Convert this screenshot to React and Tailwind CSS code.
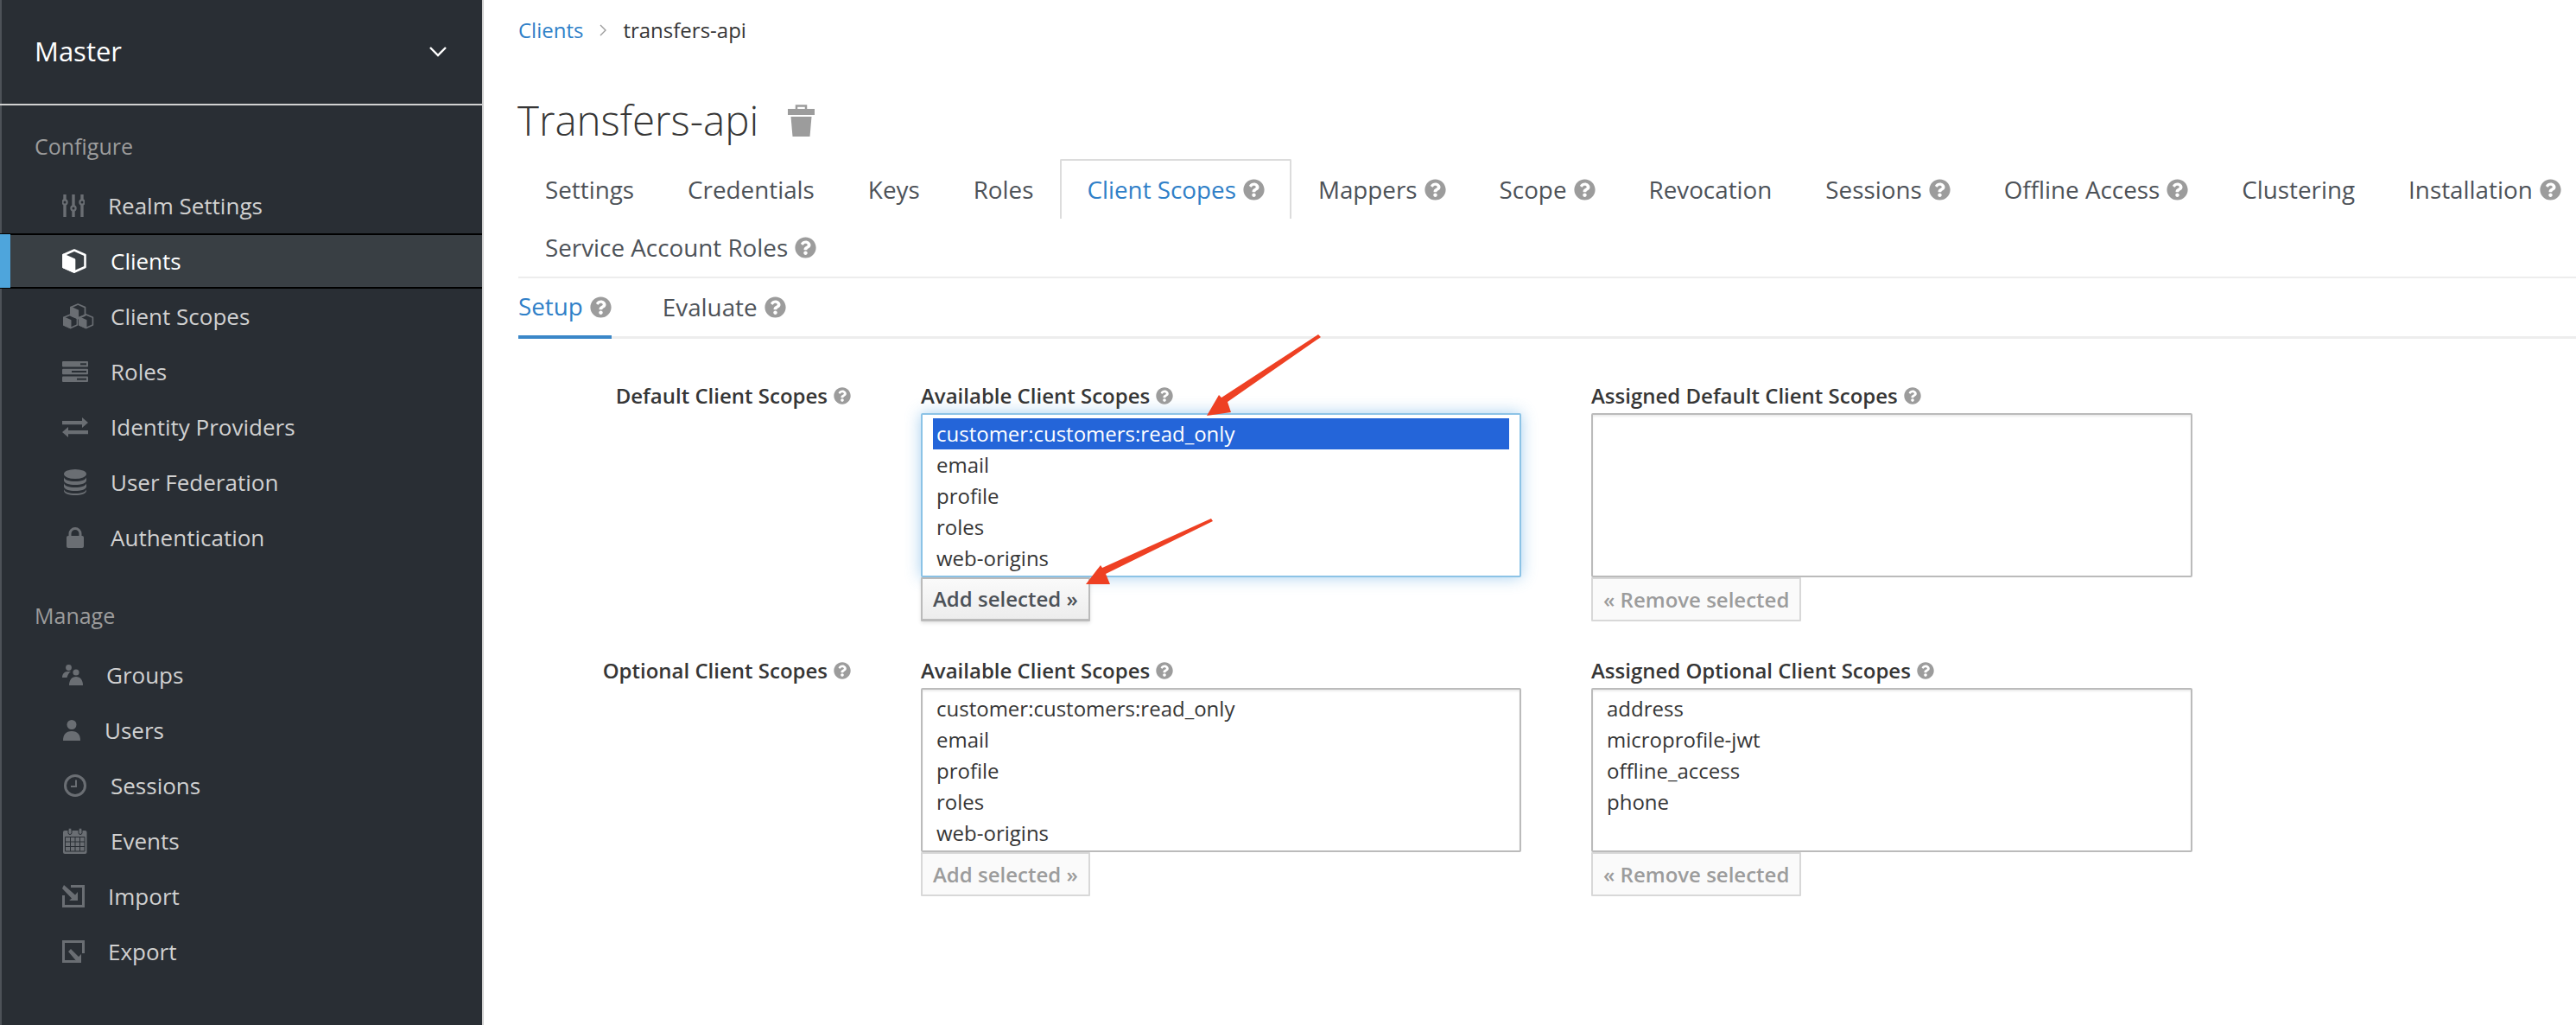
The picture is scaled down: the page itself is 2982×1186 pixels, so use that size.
import { FaQuestionCircle } from 'react-icons/fa';

function CubeShape({ x = 0, y = 0, s = 1, stroke, fill }) {
  return (
    <g transform={`translate(${x} ${y}) scale(${s})`}>
      <path d="M14 1.5 L26.5 7 V21 L14 26.5 L1.5 21 V7 Z" fill="none" stroke={stroke} strokeWidth="2.6" strokeLinejoin="round" />
      <path d="M1.5 7 L14 12.5 V26.5 L1.5 21 Z" fill={fill} stroke={stroke} strokeWidth="2.6" strokeLinejoin="round" />
    </g>
  );
}

function SlidersIcon() {
  return (
    <svg width="26" height="26" viewBox="0 0 26 26" className="mr-[27px]">
      <g stroke="#6a6e73" strokeWidth="3.4">
        <path d="M3 0V26M13 0V26M23 0V26" />
      </g>
      <g fill="#292e34" stroke="#6a6e73" strokeWidth="2.2">
        <circle cx="3" cy="9" r="2.6" />
        <circle cx="13" cy="16" r="2.6" />
        <circle cx="23" cy="9" r="2.6" />
      </g>
    </svg>
  );
}

function ClientIcon() {
  return (
    <svg width="28" height="28" viewBox="0 0 28 28" className="mr-[28px]">
      <CubeShape stroke="#fff" fill="#fff" />
    </svg>
  );
}

function ScopesIcon() {
  return (
    <svg width="37" height="30" viewBox="0 0 37 30" className="mr-[19px]">
      <CubeShape x={9} y={0} s={0.66} stroke="#6a6e73" fill="#6a6e73" />
      <CubeShape x={1} y={12} s={0.62} stroke="#6a6e73" fill="#6a6e73" />
      <CubeShape x={19} y={12} s={0.62} stroke="#6a6e73" fill="#6a6e73" />
    </svg>
  );
}

function RolesIcon() {
  return (
    <svg width="30" height="24" viewBox="0 0 30 24" className="mr-[26px]">
      <rect y="0" width="30" height="6.5" rx="1" fill="#6a6e73" />
      <rect y="8.7" width="30" height="6.5" rx="1" fill="#6a6e73" />
      <rect y="17.4" width="30" height="6.5" rx="1" fill="#6a6e73" />
      <rect x="21" y="2.3" width="7" height="2" fill="#292e34" />
      <rect x="11" y="11" width="17" height="2" fill="#292e34" />
      <rect x="17" y="19.7" width="11" height="2" fill="#292e34" />
    </svg>
  );
}

function ExchangeIcon() {
  return (
    <svg width="30" height="23" viewBox="0 0 30 23" className="mr-[26px]">
      <path d="M0 4H23V0L30 6L23 12V8.2H0Z" fill="#6a6e73" />
      <path d="M30 15H7V11L0 17L7 23V19.2H30Z" fill="#6a6e73" />
    </svg>
  );
}

function DbIcon() {
  return (
    <svg width="26" height="30" viewBox="0 0 26 30" className="ml-[2px] mr-[28px]">
      <ellipse cx="13" cy="5.5" rx="13" ry="5.5" fill="#6a6e73" />
      <path d="M0 9c0 3 6 5 13 5s13-2 13-5v4c0 3-6 5-13 5S0 16 0 13Z" fill="#6a6e73" />
      <path d="M0 16c0 3 6 5 13 5s13-2 13-5v4c0 3-6 5-13 5S0 23 0 20Z" fill="#6a6e73" />
      <path d="M0 23c0 3 6 5 13 5s13-2 13-5v2c0 3-6 5-13 5S0 28 0 25Z" fill="#6a6e73" />
    </svg>
  );
}

function LockIcon() {
  return (
    <svg width="20" height="24" viewBox="0 0 20 24" className="ml-[5px] mr-[31px]">
      <path d="M4 11V7.5a6 6 0 0 1 12 0V11" fill="none" stroke="#6a6e73" strokeWidth="3" />
      <rect y="10" width="20" height="14" rx="2" fill="#6a6e73" />
    </svg>
  );
}

function GroupsIcon() {
  return (
    <svg width="24" height="24" viewBox="0 0 24 24" className="mr-[27px]">
      <circle cx="7.5" cy="3.5" r="3.4" fill="#6a6e73" />
      <path d="M0 15c0-4 2.5-7 6-7h4c-2.5 1.5-3.5 4-4.5 7Z" fill="#6a6e73" />
      <circle cx="16" cy="9" r="3.6" fill="#6a6e73" />
      <path d="M8 24c0-6 3-10 8-10s8 4 8 10Z" fill="#6a6e73" />
    </svg>
  );
}

function UserIcon() {
  return (
    <svg width="20" height="24" viewBox="0 0 20 24" className="ml-[1px] mr-[28px]">
      <circle cx="10" cy="5.5" r="5.5" fill="#6a6e73" />
      <path d="M0 24c0-7 3-11 10-11s10 4 10 11Z" fill="#6a6e73" />
    </svg>
  );
}

function ClockIcon() {
  return (
    <svg width="26" height="26" viewBox="0 0 26 26" className="ml-[2px] mr-[28px]">
      <circle cx="13" cy="13" r="11.5" fill="none" stroke="#6a6e73" strokeWidth="3" />
      <path d="M14 6.5V14H8" fill="none" stroke="#6a6e73" strokeWidth="2" />
    </svg>
  );
}

function CalendarIcon() {
  return (
    <svg width="28" height="30" viewBox="0 0 28 30" className="ml-[1px] mr-[27px]">
      <path d="M2 3H25.5a2 2 0 0 1 2 2V28a2 2 0 0 1-2 2H2a2 2 0 0 1-2-2V5a2 2 0 0 1 2-2Z" fill="#6a6e73" />
      <rect x="6" y="0" width="4" height="7.5" rx="2" fill="#6a6e73" stroke="#292e34" strokeWidth="1" />
      <rect x="18" y="0" width="4" height="7.5" rx="2" fill="#6a6e73" stroke="#292e34" strokeWidth="1" />
      <path d="M2.5 10.5H25M2.5 16H25M2.5 21.5H25M2.5 27H25M8.5 10.5V27M14 10.5V27M19.5 10.5V27M2.5 10.5V27M25 10.5V27" stroke="#292e34" strokeWidth="1" fill="none" />
    </svg>
  );
}

function ImportIcon() {
  return (
    <svg width="26" height="26" viewBox="0 0 26 26" className="mr-[27px]">
      <path d="M10 1.5H24.5V24.5H1.5V12" fill="none" stroke="#6a6e73" strokeWidth="3" />
      <path d="M2 0L15 11.5L18 8V18H8L11 15.5L0 4Z" fill="#6a6e73" />
    </svg>
  );
}

function ExportIcon() {
  return (
    <svg width="26" height="26" viewBox="0 0 26 26" className="mr-[27px]">
      <path d="M15 24.5H1.5V1.5H24.5V15" fill="none" stroke="#6a6e73" strokeWidth="3" />
      <path d="M10 10L19 19L22 16V26H12L15.5 23L7 13Z" fill="#6a6e73" />
    </svg>
  );
}

function NavRow({ icon, label, active }) {
  if (active) {
    return (
      <div className="relative h-16 flex items-center pl-[72px] bg-[#393f44] border-y-2 border-black text-white">
        <span className="absolute left-0 -top-[1px] -bottom-[1px] w-3 bg-[#4ea5dc]"></span>
        {icon}
        <span>{label}</span>
      </div>
    );
  }
  return (
    <div className="h-16 flex items-center pl-[72px] text-[#d1d1d1]">
      {icon}
      <span>{label}</span>
    </div>
  );
}

function Help({ size = 'w-[25px] h-[25px]', ml = 'ml-[8px]' }) {
  return <FaQuestionCircle className={`${size} ${ml} text-[#9c9c9c] shrink-0`} />;
}

function Tab({ label, help, active }) {
  if (active) {
    return (
      <div className="h-[69px] flex items-center px-[29px] border-x-2 border-t-2 border-[#dcdcdc] rounded-t-[2px] text-[#2f80c8]">
        {label}
        {help && <Help />}
      </div>
    );
  }
  return (
    <div className="h-[69px] flex items-center px-[29px] border-x-2 border-t-2 border-transparent text-[#4d5258]">
      {label}
      {help && <Help />}
    </div>
  );
}

function Listbox({ items = [], selected, focused }) {
  const boxClass = focused
    ? 'border-[#8cc3e6] shadow-[0_0_18px_rgba(60,150,220,0.45)]'
    : 'border-[#bbbbbb] shadow-[inset_0_2px_2px_rgba(0,0,0,0.08)]';
  return (
    <div className={`h-[190px] border-2 rounded-[2px] bg-white pt-1 px-3 ${boxClass}`}>
      {items.map((item) => (
        <div
          key={item}
          className={
            item === selected
              ? 'h-9 flex items-center pl-1 bg-[#2465d9] text-white'
              : 'h-9 flex items-center pl-1 text-[#363636]'
          }
        >
          {item}
        </div>
      ))}
    </div>
  );
}

function ScopeColumn({ title, items, selected, focused, button, enabled, className }) {
  return (
    <div className={className}>
      <div className="h-10 flex items-center font-semibold text-[#363636]">
        {title}
        <Help size="w-[20px] h-[20px]" ml="ml-[7px]" />
      </div>
      <Listbox items={items} selected={selected} focused={focused} />
      <div
        className={
          enabled
            ? 'h-[51px] w-fit flex items-center px-[12px] border-2 border-b-[3px] border-[#bbbbbb] rounded-[1px] bg-gradient-to-b from-[#fafafa] to-[#ededed] font-semibold text-[#4d5258] shadow-[0_2px_4px_rgba(0,0,0,0.12)]'
            : 'h-[51px] w-fit flex items-center px-[12px] border-2 border-[#d8d8d8] rounded-[1px] bg-[#fafafa] font-semibold text-[#9c9c9c]'
        }
      >
        {button}
      </div>
    </div>
  );
}

const available = ['customer:customers:read_only', 'email', 'profile', 'roles', 'web-origins'];
const assigned = ['address', 'microprofile-jwt', 'offline_access', 'phone'];

export default function App() {
  return (
    <div className="relative w-[2982px] h-[1186px] overflow-hidden flex bg-white font-['Open_Sans',sans-serif] text-[26px]">
      <aside className="w-[560px] h-full shrink-0 bg-[#292e34] border-l-2 border-l-[#4d5258] border-r-2 border-r-[#d1d1d1]">
        <div className="h-[122px] -ml-[2px] flex items-center justify-between pl-[40px] pr-[40px] border-b-2 border-[#d1d1d1] text-[31px] text-white">
          <span className="-mt-[1px]">Master</span>
          <svg width="20" height="12" viewBox="0 0 20 12" className="mr-[1px]">
            <path d="M1 1L10 10L19 1" fill="none" stroke="#fff" strokeWidth="2.4" />
          </svg>
        </div>
        <div className="-ml-[2px]">
          <div className="h-[84px] pl-[40px] pt-[28px] text-[25px] leading-[38px] text-[#9c9c9c]">Configure</div>
          <NavRow icon={<SlidersIcon />} label="Realm Settings" />
          <NavRow icon={<ClientIcon />} label="Clients" active />
          <NavRow icon={<ScopesIcon />} label="Client Scopes" />
          <NavRow icon={<RolesIcon />} label="Roles" />
          <NavRow icon={<ExchangeIcon />} label="Identity Providers" />
          <NavRow icon={<DbIcon />} label="User Federation" />
          <NavRow icon={<LockIcon />} label="Authentication" />
          <div className="h-[95px] pl-[40px] pt-[39px] text-[25px] leading-[38px] text-[#9c9c9c]">Manage</div>
          <NavRow icon={<GroupsIcon />} label="Groups" />
          <NavRow icon={<UserIcon />} label="Users" />
          <NavRow icon={<ClockIcon />} label="Sessions" />
          <NavRow icon={<CalendarIcon />} label="Events" />
          <NavRow icon={<ImportIcon />} label="Import" />
          <NavRow icon={<ExportIcon />} label="Export" />
        </div>
      </aside>

      <main className="flex-1 min-w-0 pl-10 text-[24px]">
        <div className="h-[72px] flex items-center -mt-[1px]">
          <span className="text-[#2f80c8]">Clients</span>
          <svg width="8" height="14" viewBox="0 0 8 14" className="mx-[19px]">
            <path d="M1 1L7 7L1 13" fill="none" stroke="#9c9c9c" strokeWidth="1.4" />
          </svg>
          <span className="text-[#363636]">transfers-api</span>
        </div>
        <div className="h-[113px] flex items-start pt-[40px]">
          <span className="-ml-[1px] text-[47.5px] leading-[56px] font-light text-[#363636]">Transfers-api</span>
          <svg width="31" height="38" viewBox="0 0 31 38" className="ml-[34px] mt-[10px]">
            <path d="M10 7V1.5H21V7" fill="none" stroke="#9c9c9c" strokeWidth="2.5" />
            <path d="M0 5H31V12H0Z" fill="#9c9c9c" />
            <path d="M3.5 14H27.5L25.5 37H5.5Z" fill="#9c9c9c" />
          </svg>
        </div>

        <div className="flex whitespace-nowrap text-[27.8px]">
          <Tab label="Settings" />
          <Tab label="Credentials" />
          <Tab label="Keys" />
          <Tab label="Roles" />
          <Tab label="Client Scopes" help active />
          <Tab label="Mappers" help />
          <Tab label="Scope" help />
          <Tab label="Revocation" />
          <Tab label="Sessions" help />
          <Tab label="Offline Access" help />
          <Tab label="Clustering" />
          <Tab label="Installation" help />
        </div>
        <div className="h-[69px] flex items-center pl-[31px] border-b-2 border-[#ededed] text-[27.8px] text-[#4d5258]">
          Service Account Roles
          <Help />
        </div>

        <div className="h-[70px] flex gap-[59px] border-b-[3px] border-[#ededed] text-[27.8px]">
          <div className="h-[70px] flex items-center border-b-[4px] border-[#3a87c8] text-[#2f80c8]">
            Setup
            <Help />
          </div>
          <div className="h-[67px] flex items-center text-[#4d5258]">
            Evaluate
            <Help />
          </div>
        </div>

        <div className="pt-[46px] flex flex-col gap-[37px]">
          <div className="flex">
            <div className="w-[385px] h-10 flex items-center justify-end font-semibold text-[#363636]">
              Default Client Scopes
              <Help size="w-[20px] h-[20px]" ml="ml-[7px]" />
            </div>
            <ScopeColumn
              className="ml-[81px] w-[695px]"
              title="Available Client Scopes"
              items={available}
              selected="customer:customers:read_only"
              focused
              button="Add selected »"
              enabled
            />
            <ScopeColumn className="ml-[81px] w-[696px]" title="Assigned Default Client Scopes" button="« Remove selected" />
          </div>
          <div className="flex">
            <div className="w-[385px] h-10 flex items-center justify-end font-semibold text-[#363636]">
              Optional Client Scopes
              <Help size="w-[20px] h-[20px]" ml="ml-[7px]" />
            </div>
            <ScopeColumn className="ml-[81px] w-[695px]" title="Available Client Scopes" items={available} button="Add selected »" />
            <ScopeColumn className="ml-[81px] w-[696px]" title="Assigned Optional Client Scopes" items={assigned} button="« Remove selected" />
          </div>
        </div>
      </main>

      {/* red annotation arrows pasted on top of the screenshot */}
      <svg width="2982" height="1186" viewBox="0 0 2982 1186" className="absolute left-0 top-0 pointer-events-none">
        <polygon points="1526,387 1529,390 1421,465 1425,477 1397,481 1411,457 1414,460" fill="#ee4023" />
        <polygon points="1402,600 1404,603 1280,664 1285,676 1257,676 1274,654 1276,657" fill="#ee4023" />
      </svg>
    </div>
  );
}
